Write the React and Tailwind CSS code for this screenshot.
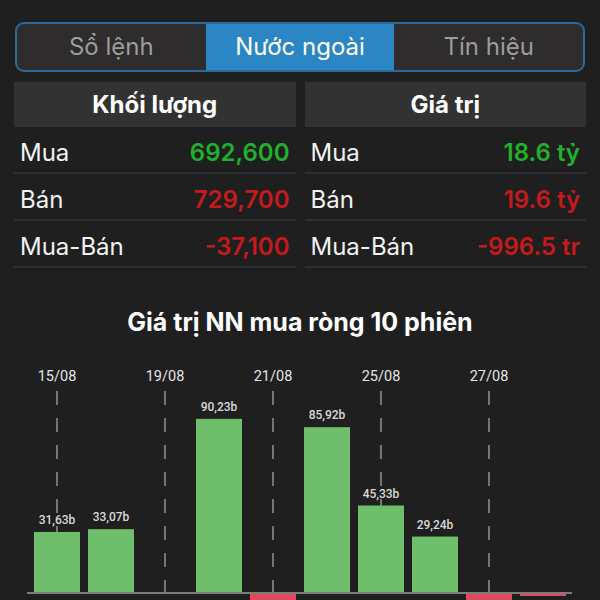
// Foreign trading panel — tabs, volume/value summary, 10-session net buy chart

const TABS = ["Sổ lệnh", "Nước ngoài", "Tín hiệu"];

const VOLUME_ROWS = [
  { label: "Mua", value: "692,600", tone: "up" },
  { label: "Bán", value: "729,700", tone: "down" },
  { label: "Mua-Bán", value: "-37,100", tone: "down" },
];

const VALUE_ROWS = [
  { label: "Mua", value: "18.6 tỷ", tone: "up" },
  { label: "Bán", value: "19.6 tỷ", tone: "down" },
  { label: "Mua-Bán", value: "-996.5 tr", tone: "down" },
];

// net buy per session, in billions (negative = net sell)
const SESSIONS = [
  { date: "15/08", value: 31.63, label: "31,63b" },
  { date: null, value: 33.07, label: "33,07b" },
  { date: "19/08", value: 0, label: null },
  { date: null, value: 90.23, label: "90,23b" },
  { date: "21/08", value: -20, label: null },
  { date: null, value: 85.92, label: "85,92b" },
  { date: "25/08", value: 45.33, label: "45,33b" },
  { date: null, value: 29.24, label: "29,24b" },
  { date: "27/08", value: -20, label: null },
  { date: null, value: -1, label: null },
];

const SLOT = 54;
const X0 = 30;
const BASE = 238;
const SCALE = 1.93;

function Tabs({ active }) {
  return (
    <div className="mx-[15px] flex h-[50px] overflow-hidden rounded-[9px] border-2 border-[#2a6a99] bg-[#2e2c2c]">
      {TABS.map(t => (
        <div
          key={t}
          className={
            t === active
              ? "flex flex-1 items-center justify-center bg-[#2d86c4] text-[24px] text-white"
              : "flex flex-1 items-center justify-center text-[24px] text-[#9c9c9c]"
          }
        >
          {t}
        </div>
      ))}
    </div>
  );
}

function SummaryTable({ title, rows }) {
  return (
    <div className="flex flex-1 flex-col">
      <div className="flex h-[45px] items-center justify-center bg-[#333232] text-[24px] font-bold text-white">
        {title}
      </div>
      {rows.map(r => (
        <div key={r.label} className="flex h-[47px] items-center justify-between border-b-2 border-[#2f2f2f] px-[6px] pt-[6px] text-[24px]">
          <span className="text-[#f2f2f2]">{r.label}</span>
          <span className={r.tone === "up" ? "font-semibold text-[#22b02a]" : "font-semibold text-[#c41a1c]"}>
            {r.value}
          </span>
        </div>
      ))}
    </div>
  );
}

function NetBuyChart() {
  return (
    <svg width="600" height="245" className="block" style={{ fontFamily: "Roboto, 'Noto Sans', sans-serif" }}>
      {SESSIONS.map((s, i) => {
        const cx = X0 + i * SLOT + SLOT / 2;
        return s.date ? (
          <g key={"d" + i}>
            <text x={cx} y={26} textAnchor="middle" fontSize="14.5" fill="#e4e4e4">{s.date}</text>
            <line x1={cx} y1={36} x2={cx} y2={245} stroke="#8a8a8a" strokeWidth="1.6" strokeDasharray="14 13" />
          </g>
        ) : null;
      })}
      {SESSIONS.map((s, i) => {
        const x = X0 + i * SLOT + 4;
        const cx = x + 23;
        if (s.value > 0) {
          const h = s.value * SCALE;
          return (
            <g key={"b" + i}>
              <rect x={x} y={BASE - h} width="46" height={h} fill="#6fbe6b" />
              <text x={cx} y={BASE - h - 8} textAnchor="middle" fontSize="12" fontWeight="500" fill="#d9d9d9">{s.label}</text>
            </g>
          );
        }
        if (s.value < 0) {
          const h = s.value < -5 ? 12 : 2;
          return <rect key={"b" + i} x={x} y={BASE + 1} width="46" height={h} fill="#df4a5c" />;
        }
        return null;
      })}
      <line x1="27" y1={BASE} x2="572" y2={BASE} stroke="#7c7c7c" strokeWidth="2" />
    </svg>
  );
}

export default function App() {
  return (
    <div className="h-[600px] w-[600px] overflow-hidden bg-[#1f1f1f] pt-[22px]" style={{ fontFamily: "Inter, 'Noto Sans', sans-serif" }}>
      <Tabs active="Nước ngoài" />
      <div className="mx-[14px] mt-[10px] flex gap-[9px]">
        <SummaryTable title="Khối lượng" rows={VOLUME_ROWS} />
        <SummaryTable title="Giá trị" rows={VALUE_ROWS} />
      </div>
      <div className="mt-[36px] text-center text-[25px] font-bold text-white">Giá trị NN mua ròng 10 phiên</div>
      <div className="mt-[13px]">
        <NetBuyChart />
      </div>
    </div>
  );
}
